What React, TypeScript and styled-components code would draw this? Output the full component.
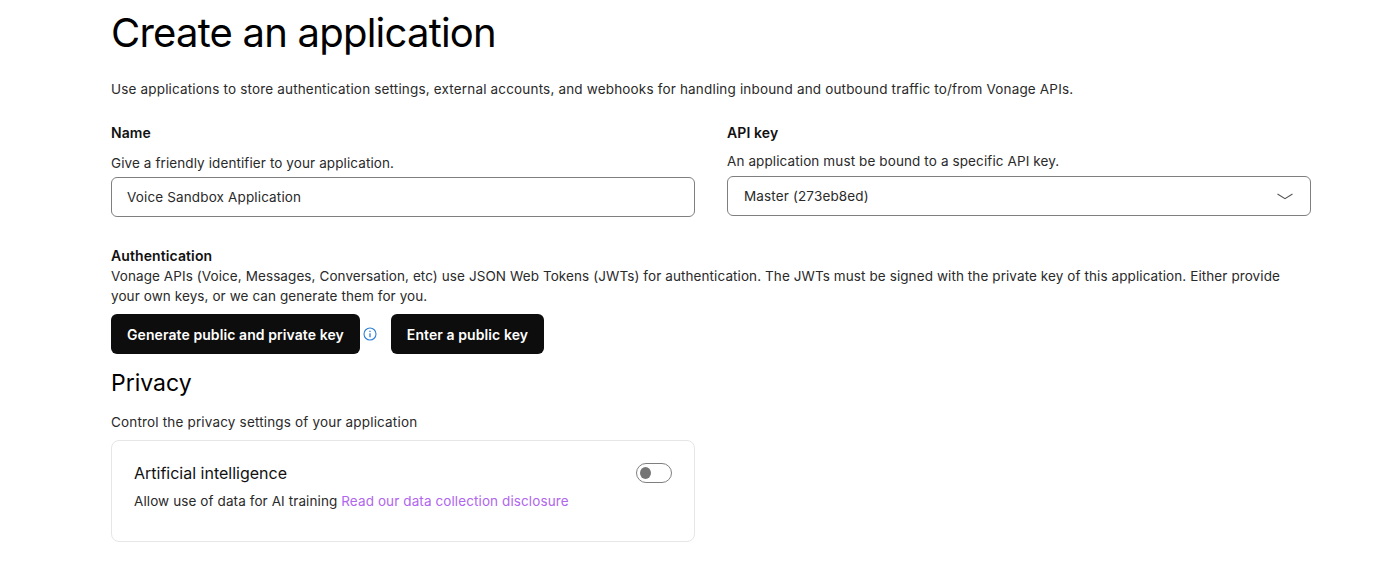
import React from 'react'
import styled, { createGlobalStyle } from 'styled-components'

const GlobalStyle = createGlobalStyle`
  html, body {
    margin: 0;
    padding: 0;
    background: #fff;
    overflow: hidden;
  }
  body {
    font-family: Inter, "Liberation Sans", sans-serif;
    color: #1a1a1a;
  }
`

const Page = styled.main`
  width: 1200px;
  height: 582px;
  padding-left: 111px;
  display: flex;
  flex-direction: column;
`

const Title = styled.h1`
  margin: 9px 0 0;
  font-size: 40px;
  line-height: 48px;
  font-weight: 400;
  letter-spacing: -0.78px;
  color: #000;
`

const Text = styled.p<{ $spacing?: number }>`
  margin: 0;
  font-size: 13.5px;
  line-height: 20px;
  letter-spacing: ${p => p.$spacing ?? 0.17}px;
  color: #2a2a2a;
`

const Intro = styled(Text)`
  margin-top: 22px;
`

const Columns = styled.div`
  display: grid;
  grid-template-columns: 584px 584px;
  column-gap: 32px;
  margin-top: 24px;
`

const Field = styled.div`
  display: flex;
  flex-direction: column;
`

const Label = styled.div`
  font-size: 14px;
  line-height: 20px;
  font-weight: 600;
  letter-spacing: 0.1px;
  color: #111;
`

const Hint = styled(Text)<{ $gap: number; $after: number }>`
  margin-top: ${p => p.$gap}px;
  margin-bottom: ${p => p.$after}px;
`

const Box = styled.div`
  box-sizing: border-box;
  height: 40px;
  border: 1px solid #7f7f7f;
  border-radius: 6px;
  padding: 0 15px;
  display: flex;
  align-items: center;
  justify-content: space-between;
  font-size: 13.5px;
  letter-spacing: 0.14px;
  color: #2a2a2a;
`

const SelectBox = styled(Box)`
  padding-left: 16px;
  padding-right: 17px;
`

const Auth = styled.section`
  margin-top: 29px;
`

const Actions = styled.div`
  display: flex;
  align-items: center;
  margin-top: 8px;
`

const Button = styled.button`
  height: 40px;
  padding: 0 16px;
  border: 0;
  border-radius: 6px;
  background: #0d0d0d;
  color: #fff;
  font-family: inherit;
  font-size: 14px;
  font-weight: 600;
  letter-spacing: 0.08px;
`

const InfoIcon = styled.svg`
  width: 14px;
  height: 14px;
  margin: 0 14px 0 3px;
  color: #2f7fd6;
`

const Subtitle = styled.h2`
  margin: 15px 0 0;
  font-size: 23px;
  line-height: 28px;
  font-weight: 400;
  color: #000;
`

const PrivacyHint = styled(Text)`
  margin-top: 15px;
`

const Card = styled.div`
  box-sizing: border-box;
  width: 584px;
  height: 102px;
  margin-top: 8px;
  padding: 22px 22px 0;
  border: 1px solid #e6e6e6;
  border-radius: 8px;
`

const CardHead = styled.div`
  display: flex;
  align-items: center;
  justify-content: space-between;
`

const CardTitle = styled.div`
  font-size: 16px;
  line-height: 20px;
  color: #111;
`

const Toggle = styled.span`
  box-sizing: border-box;
  width: 36px;
  height: 20px;
  border: 1px solid #7f7f7f;
  border-radius: 10px;
  padding: 0 3px;
  display: flex;
  align-items: center;
  &::before {
    content: '';
    width: 11px;
    height: 12px;
    border-radius: 50%;
    background: #757575;
  }
`

const CardText = styled(Text)`
  margin-top: 8px;
`

const Link = styled.a`
  color: #b066ee;
  text-decoration: none;
`

const App: React.FC = () => {
  return (
    <Page>
      <GlobalStyle />
      <Title>Create an application</Title>
      <Intro>
        Use applications to store authentication settings, external accounts, and webhooks for handling inbound and outbound traffic to/from Vonage APIs.
      </Intro>
      <Columns>
        <Field>
          <Label>Name</Label>
          <Hint $gap={10} $after={4} $spacing={0.1}>Give a friendly identifier to your application.</Hint>
          <Box>Voice Sandbox Application</Box>
        </Field>
        <Field>
          <Label>API key</Label>
          <Hint $gap={8} $after={5} $spacing={0.11}>An application must be bound to a specific API key.</Hint>
          <SelectBox>
            Master (273eb8ed)
            <svg width="16" height="7" viewBox="0 0 16 7" fill="none" stroke="#555" strokeWidth="1.1">
              <path d="M.5 1 8 5.6 15.5 1" />
            </svg>
          </SelectBox>
        </Field>
      </Columns>
      <Auth>
        <Label>Authentication</Label>
        <Text $spacing={0.09}>
          Vonage APIs (Voice, Messages, Conversation, etc) use JSON Web Tokens (JWTs) for authentication. The JWTs must be signed with the private key of this application. Either provide your own keys, or we can generate them for you.
        </Text>
        <Actions>
          <Button>Generate public and private key</Button>
          <InfoIcon viewBox="0 0 14 14" fill="none" stroke="currentColor">
            <circle cx="7" cy="7" r="6" strokeWidth="1.1" />
            <path d="M7 6.2V10.2" strokeWidth="1.3" />
            <path d="M7 3.7V5" strokeWidth="1.3" />
          </InfoIcon>
          <Button>Enter a public key</Button>
        </Actions>
      </Auth>
      <Subtitle>Privacy</Subtitle>
      <PrivacyHint>Control the privacy settings of your application</PrivacyHint>
      <Card>
        <CardHead>
          <CardTitle>Artificial intelligence</CardTitle>
          <Toggle />
        </CardHead>
        <CardText $spacing={0.1}>
          Allow use of data for AI training <Link>Read our data collection disclosure</Link>
        </CardText>
      </Card>
    </Page>
  )
}

export default App
